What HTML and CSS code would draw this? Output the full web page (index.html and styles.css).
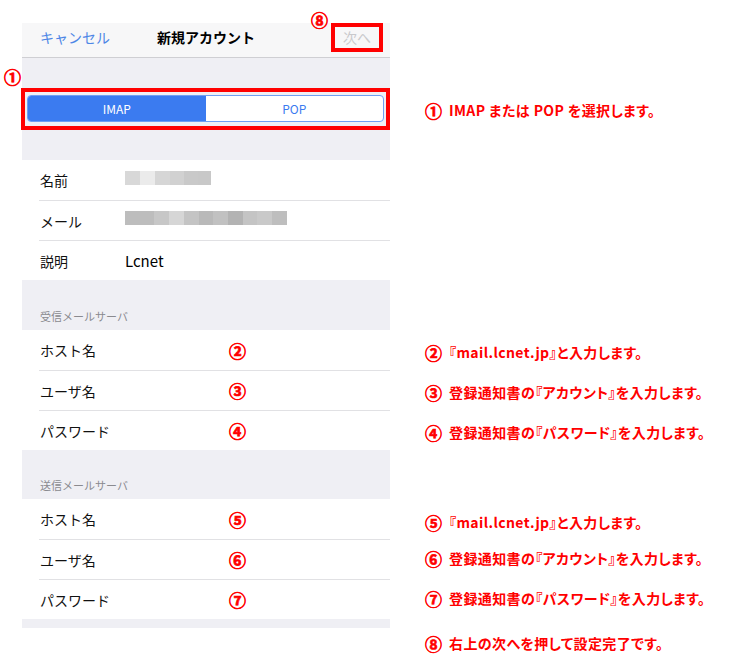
FILE: index.html
```html
<!DOCTYPE html>
<html lang="ja">
<head>
  <meta charset="UTF-8" />
  <meta name="viewport" content="width=device-width, initial-scale=1.0"/>
  <title>メールアカウント設定</title>
  <link rel="stylesheet" href="styles.css">
</head>
<body>
  <div class="page">
    <span class="marker marker-next">⑧</span>
    <span class="marker marker-seg">①</span>

    <div class="phone">
      <div class="navbar">
        <span class="nav-cancel">キャンセル</span>
        <span class="nav-title">新規アカウント</span>
        <span class="nav-next">次へ</span>
      </div>

      <div class="seg-area">
        <div class="seg-frame">
          <div class="segmented">
            <div class="seg seg-active">IMAP</div>
            <div class="seg">POP</div>
          </div>
        </div>
      </div>

      <div class="group">
        <div class="row"><span class="label">名前</span><span class="blur blur-name"></span></div>
        <div class="row"><span class="label">メール</span><span class="blur blur-mail"></span></div>
        <div class="row"><span class="label">説明</span><span class="value">Lcnet</span></div>
      </div>

      <div class="section-header">受信メールサーバ</div>
      <div class="group">
        <div class="row"><span class="label">ホスト名</span><span class="mark">②</span></div>
        <div class="row"><span class="label">ユーザ名</span><span class="mark">③</span></div>
        <div class="row"><span class="label">パスワード</span><span class="mark">④</span></div>
      </div>

      <div class="section-header section-header-out">送信メールサーバ</div>
      <div class="group">
        <div class="row"><span class="label">ホスト名</span><span class="mark">⑤</span></div>
        <div class="row"><span class="label">ユーザ名</span><span class="mark">⑥</span></div>
        <div class="row"><span class="label">パスワード</span><span class="mark">⑦</span></div>
      </div>
      <div class="phone-foot"></div>
    </div>

    <div class="notes">
      <div class="note note-seg"><span class="note-num">①</span>IMAP または POP を選択します。</div>
      <div class="note note-in"><span class="note-num">②</span>『mail.lcnet.jp』と入力します。</div>
      <div class="note"><span class="note-num">③</span>登録通知書の『アカウント』を入力します。</div>
      <div class="note"><span class="note-num">④</span>登録通知書の『パスワード』を入力します。</div>
      <div class="note note-out"><span class="note-num">⑤</span>『mail.lcnet.jp』と入力します。</div>
      <div class="note note-tight"><span class="note-num">⑥</span>登録通知書の『アカウント』を入力します。</div>
      <div class="note"><span class="note-num">⑦</span>登録通知書の『パスワード』を入力します。</div>
      <div class="note note-last"><span class="note-num">⑧</span>右上の次へを押して設定完了です。</div>
    </div>
  </div>
</body>
</html>
```

FILE: styles.css
```css
:root {
  --group-bg: #efeff4;
  --nav-bg: #f7f7f8;
  --line: #e1e1e4;
  --ios-blue: #3b7bf0;
  --mark-red: #ff0000;
  --text: #111111;
  --text-secondary: #8a8a8f;
}

* {
  margin: 0;
  padding: 0;
  box-sizing: border-box;
}

body {
  background: #ffffff;
  color: var(--text);
  font-family: "Noto Sans CJK JP", "Noto Sans", sans-serif;
}

.page {
  position: relative;
  display: flex;
  align-items: flex-start;
  height: 666px;
}

/* circled markers that sit over the screenshot */
.marker {
  position: absolute;
  color: var(--mark-red);
  font-weight: bold;
  font-size: 17px;
  line-height: 17px;
  -webkit-text-stroke: 0.7px var(--mark-red);
}

.marker-next {
  left: 311px;
  top: 11px;
}

.marker-seg {
  left: 4px;
  top: 68px;
}

.phone {
  width: 368px;
  margin: 23px 0 0 22px;
  background: var(--group-bg);
}

.navbar {
  display: grid;
  grid-template-columns: 1fr auto 1fr;
  align-items: start;
  height: 35px;
  background: var(--nav-bg);
  border-bottom: 1px solid #cfcfd3;
  font-size: 14px;
  line-height: 29px;
}

.nav-cancel {
  color: #4d86e6;
  padding-left: 18px;
}

.nav-title {
  font-weight: bold;
  color: #000;
}

.nav-next {
  justify-self: end;
  margin-right: 7px;
  width: 52px;
  height: 29px;
  line-height: 21px;
  border: 4px solid var(--mark-red);
  text-align: center;
  color: #c9c9cc;
}

.seg-area {
  padding: 30px 0 30px;
}

.seg-frame {
  margin-left: -1px;
  width: 369px;
  border: 4px solid var(--mark-red);
  padding: 3px 2px 4px 2px;
}

.segmented {
  display: grid;
  grid-template-columns: 1fr 1fr;
  height: 27px;
  border: 1px solid #6f9ff2;
  border-radius: 4px;
  overflow: hidden;
  background: #fff;
  font-size: 12px;
  line-height: 25px;
  text-align: center;
  color: var(--ios-blue);
}

.seg-active {
  background: var(--ios-blue);
  color: #fff;
}

.group {
  background: #fff;
  padding-left: 17px;
}

.row {
  display: flex;
  align-items: center;
  height: 40px;
  padding-left: 1px;
  border-top: 1px solid var(--line);
  font-size: 14px;
}

.row:first-child {
  border-top: none;
}

.label {
  width: 85px;
  flex-shrink: 0;
}

.value {
  font-size: 15px;
  color: #000;
  margin-top: -1px;
}

.blur {
  height: 14px;
  margin-top: -4px;
}

.blur-name {
  width: 86px;
  background: linear-gradient(to right,
    #d8d8d8 0 15px, #ebebeb 15px 30px, #d6d6d6 30px 45px,
    #d1d1d1 45px 59px, #c9c9c9 59px 73px, #c8c8c8 73px 86px);
}

.blur-mail {
  width: 162px;
  margin-top: -6px;
  background: linear-gradient(to right,
    #bdbdbd 0 29px, #c7c7c7 29px 44px, #d6d6d6 44px 59px,
    #c4c4c4 59px 74px, #b9b9b9 74px 88px, #c1c1c1 88px 103px,
    #b3b3b3 103px 118px, #c4c4c4 118px 132px, #c9c9c9 132px 147px,
    #bebebe 147px 162px);
}

.mark {
  margin-left: 104px;
  color: var(--mark-red);
  font-weight: bold;
  font-size: 17px;
  -webkit-text-stroke: 0.7px var(--mark-red);
}

.section-header {
  padding: 29px 0 7px 18px;
  font-size: 11px;
  line-height: 14px;
  color: var(--text-secondary);
}

.section-header-out {
  padding-top: 28px;
}

.phone-foot {
  height: 9px;
}

.notes {
  display: flex;
  flex-direction: column;
  gap: 20px;
  margin-left: 35px;
}

.note {
  display: flex;
  align-items: center;
  height: 20px;
  font-size: 14px;
  font-weight: bold;
  font-feature-settings: "palt";
  letter-spacing: 0.4px;
  color: var(--mark-red);
  white-space: nowrap;
}

.note-num {
  width: 17px;
  margin-right: 7px;
  font-size: 17px;
  -webkit-text-stroke: 0.6px var(--mark-red);
}

.note-seg {
  margin-top: 100px;
}

.note-in {
  margin-top: 202px;
}

.note-out {
  margin-top: 50px;
}

.note-tight {
  margin-top: -4px;
}

.note-last {
  margin-top: 5px;
}
```
